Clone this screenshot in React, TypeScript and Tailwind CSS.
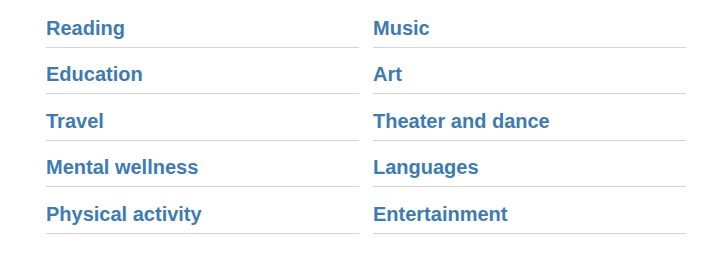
const leftTopics = ['Reading', 'Education', 'Travel', 'Mental wellness', 'Physical activity'];
const rightTopics = ['Music', 'Art', 'Theater and dance', 'Languages', 'Entertainment'];

function TopicColumn({ items }: { items: string[] }) {
  return (
    <ul className="flex flex-col">
      {items.map((item) => (
        <li key={item} className="flex h-[46.5px] items-end border-b border-[#d4d4d4] pb-[7px]">
          <a href="#" className="text-[20px] font-bold leading-[24px] text-[#3e7bb0]">
            {item}
          </a>
        </li>
      ))}
    </ul>
  );
}

export default function App() {
  return (
    <div className="h-[261px] w-[717px] bg-white pt-[1px] font-['Liberation_Sans',Arial,sans-serif]">
      <div className="ml-[46px] grid w-[640px] grid-cols-2 gap-x-[14px]">
        <TopicColumn items={leftTopics} />
        <TopicColumn items={rightTopics} />
      </div>
    </div>
  );
}
